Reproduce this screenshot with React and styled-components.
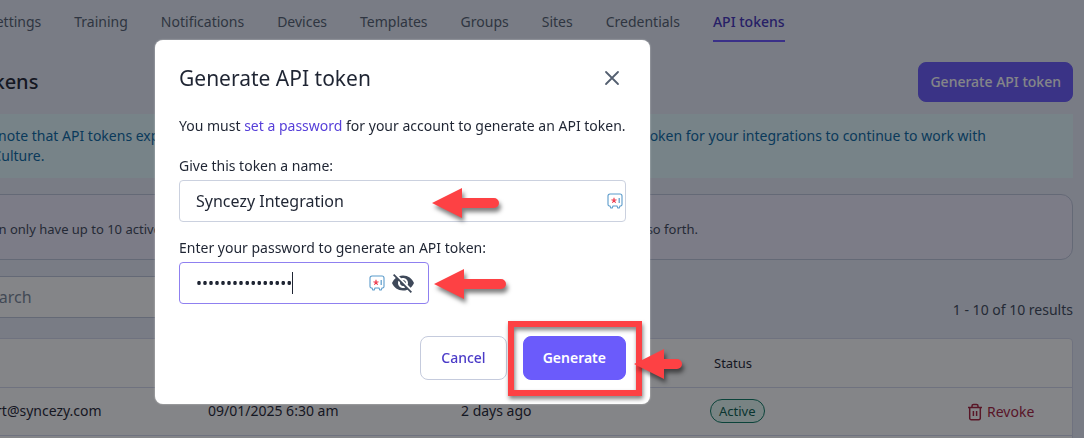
import React, { useState } from 'react';
import styled, { createGlobalStyle } from 'styled-components';
import { MdVisibilityOff } from 'react-icons/md';

const GlobalStyle = createGlobalStyle`
    * {
        box-sizing: border-box;
    }
    body {
        margin: 0;
        overflow: hidden;
        background: #e8edf8;
        color: #1f2533;
        font-family: "Noto Sans", sans-serif;
        font-size: 14px;
        line-height: 20px;
    }
    button, input {
        font: inherit;
        color: inherit;
    }
`;

const Page = styled.div`
    margin-left: -64px;
    padding-right: 11px;
`;
const Nav = styled.nav`
    display: flex;
    gap: 33px;
    padding-left: 52px;
`;
const NavLink = styled.a`
    padding: 12px 0 8px;
    border-bottom: 2px solid ${({ $active }) => ($active ? '#6b55ff' : 'transparent')};
    color: ${({ $active }) => ($active ? '#4433bb' : '#545f70')};
    font-weight: ${({ $active }) => ($active ? 500 : 400)};
    text-decoration: none;
    white-space: nowrap;
`;
const PageHeader = styled.header`
    display: flex;
    align-items: center;
    justify-content: space-between;
    margin-top: 20px;
`;
const PageTitle = styled.h1`
    margin: 0;
    font-size: 20px;
    line-height: 28px;
    font-weight: 500;
`;
const Button = styled.button`
    height: ${({ $tall }) => ($tall ? '44px' : '40px')};
    padding: 0 ${({ $tall, $outline }) => ($outline ? '20px' : $tall ? '19px' : '11px')};
    border: 1px solid ${({ $outline }) => ($outline ? '#c5cbdd' : '#6b5bfb')};
    border-radius: 8px;
    background: ${({ $outline }) => ($outline ? '#fff' : '#6b5bfb')};
    color: ${({ $outline }) => ($outline ? '#4b3bc8' : '#fff')};
    font-weight: ${({ $bold }) => ($bold ? 600 : 500)};
    cursor: pointer;
`;
const Banner = styled.p`
    margin: 12px 0 16px;
    padding: 12px 64px 12px 16px;
    background: #e4fbff;
    color: #0a68a4;
`;
const Limit = styled.p`
    margin: 0 0 16px;
    padding: 24px 22px 20px;
    border: 1px solid #bfc6db;
    border-radius: 12px;
    background: #efedfd;
    font-size: 13px;
    color: #3f495a;
`;
const Toolbar = styled.div`
    display: flex;
    align-items: flex-end;
    justify-content: space-between;
    margin-bottom: 20px;
`;
const Search = styled.input`
    width: 400px;
    height: 42px;
    padding: 0 44px;
    border: 1px solid #bfc6db;
    border-radius: 4px;
    background: #fff;
    font-size: 16px;
    &::placeholder {
        color: #7b8798;
        opacity: 1;
    }
`;
const Results = styled.span`
    line-height: 16px;
    color: #3f495a;
`;
const TableCard = styled.div`
    border: 1px solid #d5d9ec;
    border-radius: 4px;
    background: #fff;
    overflow: hidden;
`;
const Table = styled.table`
    width: 100%;
    table-layout: fixed;
    border-collapse: collapse;
    th, td {
        height: 48px;
        padding: 0 0 0 18px;
        border-bottom: 1px solid #d5d9ec;
        text-align: left;
        font-weight: 400;
    }
    th {
        font-size: 13px;
    }
    td:last-child {
        padding-right: 38px;
        text-align: right;
    }
`;
const Col = styled.col`
    width: 253px;
`;
const Chip = styled.span`
    display: inline-block;
    margin-left: -4px;
    padding: 1px 8px;
    border: 1px solid #0d7a62;
    border-radius: 12px;
    background: #e6fbf5;
    color: #0a5f4e;
    font-size: 13px;
`;
const Revoke = styled.button`
    display: inline-flex;
    align-items: center;
    gap: 4px;
    padding: 0;
    border: 0;
    background: none;
    color: #a8203c;
    vertical-align: middle;
    cursor: pointer;
`;

const Overlay = styled.div`
    position: fixed;
    inset: 0;
    padding: 40px 0 0 155px;
    background: rgba(9, 11, 17, 0.5);
`;
const Modal = styled.form`
    width: 495px;
    max-width: 100%;
    padding: 24px;
    border-radius: 8px;
    background: #fff;
    box-shadow: 0 0 2px rgba(255, 255, 255, 0.6);
`;
const ModalHeader = styled.div`
    display: flex;
    align-items: center;
    justify-content: space-between;
    margin-bottom: 24px;
`;
const ModalTitle = styled.h2`
    margin: 0;
    font-size: 21px;
    line-height: 28px;
    font-weight: 400;
`;
const Close = styled.button`
    display: flex;
    padding: 4px;
    border: 0;
    background: none;
    color: #545f70;
    cursor: pointer;
`;
const Text = styled.p`
    margin: 0 0 20px;
    white-space: nowrap;
`;
const Link = styled.a`
    color: #5740d9;
    text-decoration: none;
`;
const Label = styled.label`
    display: block;
    margin-bottom: 4px;
`;
const Field = styled.div`
    position: relative;
    display: flex;
    align-items: center;
    width: ${({ $width }) => $width || '100%'};
    height: 42px;
    margin-bottom: 16px;
    padding: 0 ${({ $focused }) => ($focused ? '13px' : '2px')} 0 16px;
    border: 1px solid ${({ $focused }) => ($focused ? '#8f80f0' : '#cbd1df')};
    border-radius: 4px;
`;
const Input = styled.input`
    flex: ${({ $fit }) => ($fit ? 'none' : '1')};
    width: ${({ $fit }) => ($fit ? '96px' : 'auto')};
    min-width: 0;
    padding: 0;
    border: 0;
    outline: 0;
    background: none;
    font-size: 16px;
    line-height: 24px;
    caret-color: transparent;
`;
const Caret = styled.span`
    width: 1px;
    height: 22px;
    margin-right: auto;
    background: #1f2533;
`;
const Toggle = styled.button`
    display: flex;
    margin-left: 6px;
    padding: 0;
    border: 0;
    background: none;
    color: #3f495a;
    cursor: pointer;
`;
const Actions = styled.div`
    display: flex;
    justify-content: flex-end;
    gap: 16px;
    margin-top: 32px;
`;
const Highlighted = styled.div`
    position: relative;
`;
const Frame = styled.span`
    position: absolute;
    inset: -15px -16px -16px -15px;
    border: 6px solid #fd4144;
    filter: drop-shadow(1px 3px 2px rgba(0, 0, 0, 0.5));
    pointer-events: none;
`;
const ArrowSvg = styled.svg`
    position: absolute;
    left: ${({ $left }) => $left}px;
    top: ${({ $top }) => $top}px;
    overflow: visible;
    filter: drop-shadow(2px 4px 2px rgba(0, 0, 0, 0.5));
    pointer-events: none;
`;

const Arrow = ({ length, left, top }) => (
    <ArrowSvg $left={left} $top={top} width={length} height="30" fill="#fd4144" aria-hidden="true">
        <path d={`M0 15L30 0V10H${length - 5}a5 5 0 0 1 0 10H30V30Z`} />
    </ArrowSvg>
);

const VaultIcon = () => (
    <svg width="16" height="16" viewBox="0 0 16 16" fill="none" aria-hidden="true">
        <path d="M3 1h10a2 2 0 0 1 2 2v8.500a1.500 1.500 0 0 1-1.500 1.500H13l-.8 2h-1.400L10 13H6l-.8 2H3.800L3 13h-.5A1.500 1.500 0 0 1 1 11.500V3a2 2 0 0 1 2-2Z" stroke="#5b9bcb" strokeWidth="1.100" />
        <path d="M12.200 5v5" stroke="#5b9bcb" strokeWidth="1.200" />
        <path d="M7 7.500V4.800M7 7.500l2.500-.8M7 7.500l1.600 2.200M7 7.500l-1.600 2.200M7 7.500l-2.500-.8" stroke="#ec3347" strokeWidth="1.100" />
    </svg>
);

const TrashIcon = () => (
    <svg width="16" height="18" viewBox="0 0 16 18" fill="none" stroke="currentColor" strokeWidth="1.500" aria-hidden="true">
        <path d="M1 4.500h14M5 4.500V3a1.500 1.500 0 0 1 1.500-1.500h3A1.500 1.500 0 0 1 11 3v1.500M2.700 4.500v10.700a1.500 1.500 0 0 0 1.500 1.500h7.600a1.500 1.500 0 0 0 1.500-1.500V4.500M6.400 8v5M9.600 8v5" />
    </svg>
);

const CloseIcon = () => (
    <svg width="20" height="20" viewBox="0 0 20 20" stroke="currentColor" strokeWidth="1.800" strokeLinecap="round" aria-hidden="true">
        <path d="M4 4l12 12M16 4L4 16" />
    </svg>
);

const tabs = ['Settings', 'Training', 'Notifications', 'Devices', 'Templates', 'Groups', 'Sites', 'Credentials', 'API tokens'];

const tokens = [
    { email: 'support@syncezy.com', expires: '09/01/2025 6:30 am', used: '2 days ago', status: 'Active' },
];

const GenerateModal = () => {
    const [name, setName] = useState('Syncezy Integration');
    const [password, setPassword] = useState('integration-2024');

    return (
        <Overlay>
            <Modal role="dialog" aria-labelledby="modal-title" onSubmit={(e) => e.preventDefault()}>
                <ModalHeader>
                    <ModalTitle id="modal-title">Generate API token</ModalTitle>
                    <Close type="button" aria-label="Close"><CloseIcon /></Close>
                </ModalHeader>
                <Text>You must <Link href="#password">set a password</Link> for your account to generate an API token.</Text>
                <Label htmlFor="token-name">Give this token a name:</Label>
                <Field>
                    <Input id="token-name" value={name} onChange={(e) => setName(e.target.value)} />
                    <VaultIcon />
                    <Arrow length={67} left={252} top={7} />
                </Field>
                <Label htmlFor="password">Enter your password to generate an API token:</Label>
                <Field $focused $width="250px">
                    <Input id="password" type="password" $fit value={password} onChange={(e) => setPassword(e.target.value)} />
                    <Caret />
                    <VaultIcon />
                    <Toggle type="button" aria-label="Show password"><MdVisibilityOff size={24} /></Toggle>
                    <Arrow length={72} left={254} top={6} />
                </Field>
                <Actions>
                    <Button type="button" $tall $outline>Cancel</Button>
                    <Highlighted>
                        <Button type="submit" $tall $bold>Generate</Button>
                        <Frame />
                        <Arrow length={48} left={111} top={13} />
                    </Highlighted>
                </Actions>
            </Modal>
        </Overlay>
    );
};

const App = () => (
    <>
        <GlobalStyle />
        <Page>
            <Nav>
                {tabs.map((tab) => (
                    <NavLink key={tab} href="#" $active={tab === 'API tokens'}>{tab}</NavLink>
                ))}
            </Nav>
            <PageHeader>
                <PageTitle>API tokens</PageTitle>
                <Button type="button">Generate API token</Button>
            </PageHeader>
            <Banner>
                Please note that API tokens expire after 30 days of inactivity. Please make sure you are using a recent API token for your integrations to continue to work with SafetyCulture.
            </Banner>
            <Limit>
                You can only have up to 10 active API tokens at a time. Create one for each integration, like reports, exports, and so forth.
            </Limit>
            <Toolbar>
                <Search type="search" aria-label="Search" placeholder="Search" />
                <Results>1 - 10 of 10 results</Results>
            </Toolbar>
            <TableCard>
                <Table>
                    <colgroup>
                        <Col />
                        <Col />
                        <Col />
                        <Col />
                        <col />
                    </colgroup>
                    <thead>
                        <tr>
                            <th>User</th>
                            <th>Expires</th>
                            <th>Last used</th>
                            <th>Status</th>
                            <th aria-label="Actions" />
                        </tr>
                    </thead>
                    <tbody>
                        {tokens.map((token) => (
                            <tr key={token.email}>
                                <td>{token.email}</td>
                                <td>{token.expires}</td>
                                <td>{token.used}</td>
                                <td><Chip>{token.status}</Chip></td>
                                <td><Revoke type="button"><TrashIcon />Revoke</Revoke></td>
                            </tr>
                        ))}
                        <tr>
                            <td colSpan={5} />
                        </tr>
                    </tbody>
                </Table>
            </TableCard>
        </Page>
        <GenerateModal />
    </>
);

export default App;
